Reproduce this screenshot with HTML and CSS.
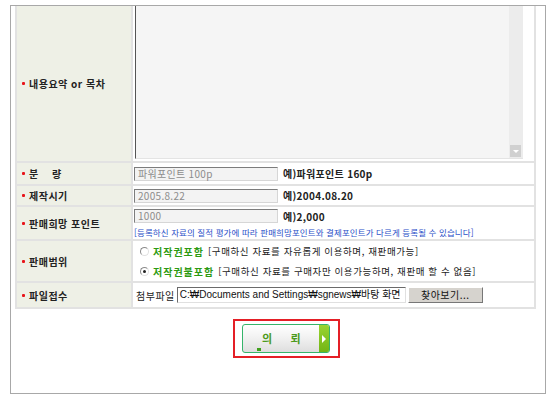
FILE: index.html
```html
<!DOCTYPE html>
<html lang="ko">
<head>
    <meta charset="UTF-8">
    <meta name="viewport" content="width=device-width, initial-scale=1.0">
    <title>자료 등록</title>
    <link rel="stylesheet" href="styles.css">
</head>

<body>
    <div class="frame">
        <div class="form-grid">
            <div class="label"><span class="req"></span>내용요약 or 목차</div>
            <div class="value">
                <div class="textbox">
                    <div class="scrollbar"><span class="scroll-down"></span></div>
                </div>
            </div>

            <div class="label"><span class="req"></span>분&nbsp;&nbsp;&nbsp;&nbsp;량</div>
            <div class="value line">
                <span class="field">파워포인트 100p</span>
                <span class="hint">예)파워포인트 160p</span>
            </div>

            <div class="label"><span class="req"></span>제작시기</div>
            <div class="value line">
                <span class="field">2005.8.22</span>
                <span class="hint">예)2004.08.20</span>
            </div>

            <div class="label"><span class="req"></span>판매희망 포인트</div>
            <div class="value stack">
                <div class="line">
                    <span class="field">1000</span>
                    <span class="hint">예)2,000</span>
                </div>
                <p class="notice">[등록하신 자료의 질적 평가에 따라 판매희망포인트와 결제포인트가 다르게 등록될 수 있습니다]</p>
            </div>

            <div class="label"><span class="req"></span>판매범위</div>
            <div class="value stack radios">
                <div class="radio-line">
                    <span class="radio"></span>
                    <b class="opt">저작권포함</b>
                    <span class="desc">[구매하신 자료를 자유롭게 이용하며, 재판매가능]</span>
                </div>
                <div class="radio-line">
                    <span class="radio checked"></span>
                    <b class="opt">저작권불포함</b>
                    <span class="desc">[구매하신 자료를 구매자만 이용가능하며, 재판매 할 수 없음]</span>
                </div>
            </div>

            <div class="label"><span class="req"></span>파일접수</div>
            <div class="value line file-row">
                <span class="file-label">첨부파일</span>
                <span class="file-path">C:₩Documents and Settings₩sgnews₩바탕 화면</span>
                <span class="browse">찾아보기...</span>
            </div>
        </div>

        <div class="actions">
            <div class="focus-box">
                <div class="submit">
                    <span class="submit-text">의&nbsp;&nbsp;&nbsp;&nbsp;&nbsp;&nbsp;뢰</span>
                    <span class="submit-arrow"></span>
                </div>
            </div>
        </div>
    </div>
</body>
</html>
```

FILE: styles.css
```css
* {
    box-sizing: border-box;
    margin: 0;
    padding: 0;
}

body {
    font-family: "Noto Sans CJK KR", "Liberation Sans", sans-serif;
    font-size: 10px;
    color: #333;
    background-color: #fff;
    padding: 5px 14px 0 10px;
}

.frame {
    border: 1px solid #a8a8a8;
    height: 389px;
    padding: 0 9px 0 4px;
}

.form-grid {
    display: grid;
    grid-template-columns: 116px 1fr;
    grid-template-rows: 157px 23px 21px 34px 42px 24px;
    border: 2px solid #e2e2e2;
    border-top: 0;
}

.label {
    display: flex;
    align-items: center;
    padding-left: 5px;
    background-color: #eef0e6;
    border-right: 2px solid #e2e2e2;
    border-bottom: 2px solid #e2e2e2;
    font-weight: bold;
    letter-spacing: 0.5px;
    color: #222;
    white-space: nowrap;
}

.req {
    display: inline-block;
    width: 3px;
    height: 3px;
    background-color: #e8141a;
    border-radius: 1px;
    margin-right: 4px;
}

.value {
    border-bottom: 2px solid #e2e2e2;
    padding-left: 1px;
}

.label:nth-last-child(2),
.value:last-child {
    border-bottom: 0;
}

.line {
    display: flex;
    align-items: center;
    gap: 5px;
}

.stack {
    display: flex;
    flex-direction: column;
    justify-content: center;
}

/* textarea */
.textbox {
    display: flex;
    justify-content: flex-end;
    width: 388px;
    height: 153px;
    margin-left: 1px;
    background-color: #f5f5f5;
    border-left: 1px solid #555;
    border-bottom: 1px solid #e4e4e4;
}

.scrollbar {
    display: flex;
    align-items: flex-end;
    width: 14px;
    background-color: #ececec;
}

.scroll-down {
    position: relative;
    width: 11px;
    height: 12px;
    margin: 0 2px 1px 1px;
    background-color: #d0d0d0;
}

.scroll-down::after {
    content: "";
    position: absolute;
    left: 3px;
    top: 5px;
    border-left: 3px solid transparent;
    border-right: 3px solid transparent;
    border-top: 3px solid #fff;
}

/* inputs */
.field {
    display: inline-block;
    width: 144px;
    height: 14px;
    padding-left: 3px;
    line-height: 12px;
    background-color: #f3f3f3;
    border: 1px solid;
    border-color: #7c7c7c #d6d6d6 #d6d6d6 #7c7c7c;
    color: #8c8c8c;
    font-size: 10px;
    letter-spacing: 0.3px;
}

.hint {
    font-weight: bold;
    letter-spacing: 0.3px;
    color: #222;
}

.notice {
    margin-top: 2px;
    font-size: 8.5px;
    letter-spacing: 0.1px;
    color: #2a4fc8;
    white-space: nowrap;
}

/* radios */
.radios {
    padding-left: 7px;
    gap: 5px;
}

.radio-line {
    display: flex;
    align-items: center;
    gap: 4px;
    white-space: nowrap;
}

.radio {
    position: relative;
    width: 9px;
    height: 9px;
    border-radius: 50%;
    border: 1px solid;
    border-color: #8a8a8a #e0e0e0 #e0e0e0 #8a8a8a;
    background-color: #fff;
}

.radio.checked::after {
    content: "";
    position: absolute;
    left: 2px;
    top: 2px;
    width: 3px;
    height: 3px;
    border-radius: 50%;
    background-color: #222;
}

.opt {
    color: #2d9a12;
    letter-spacing: 1px;
}

.desc {
    font-size: 9.5px;
    letter-spacing: 0.6px;
    color: #222;
}

/* file */
.file-row {
    gap: 2px;
    padding-left: 3px;
}

.file-label {
    color: #222;
    letter-spacing: 0.5px;
}

.file-path {
    width: 229px;
    height: 16px;
    padding-left: 2px;
    overflow: hidden;
    white-space: nowrap;
    line-height: 14px;
    font-family: "Liberation Sans", "Noto Sans CJK KR", sans-serif;
    font-size: 10px;
    color: #111;
    background-color: #fff;
    border: 1px solid;
    border-color: #6a6a6a #e0e0e0 #e0e0e0 #6a6a6a;
}

.browse {
    width: 75px;
    height: 16px;
    line-height: 14px;
    text-align: center;
    background-color: #d6d3ce;
    border: 1px solid;
    border-color: #fff #777 #777 #fff;
    color: #111;
    letter-spacing: 0.5px;
}

/* submit button */
.actions {
    display: flex;
    justify-content: center;
    padding: 10px 0 0 22px;
}

.focus-box {
    padding: 3px 8px 3px 7px;
    border: 2px solid #e41f26;
}

.submit {
    position: relative;
    display: flex;
    width: 88px;
    height: 29px;
    border: 1px solid #35b46a;
    border-radius: 3px;
    overflow: hidden;
    background: linear-gradient(#ffffff, #f2f2f2 45%, #dedede);
}

.submit::before {
    content: "";
    position: absolute;
    left: 14px;
    top: 23px;
    width: 4px;
    height: 3px;
    background-color: #3fa01c;
}

.submit-text {
    flex: 1;
    padding-left: 19px;
    line-height: 26px;
    font-size: 11px;
    font-weight: bold;
    color: #4c9a1c;
}

.submit-arrow {
    position: relative;
    width: 10px;
    background: linear-gradient(#9ad431, #72b515);
}

.submit-arrow::after {
    content: "";
    position: absolute;
    left: 3px;
    top: 10px;
    border-top: 4px solid transparent;
    border-bottom: 4px solid transparent;
    border-left: 4px solid #fff;
}
```
